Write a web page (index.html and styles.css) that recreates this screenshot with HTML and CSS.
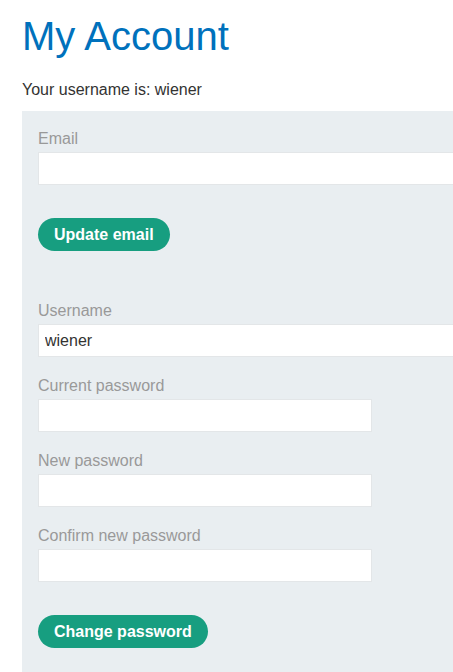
FILE: index.html
```html
<!DOCTYPE html>
<html>
<head>
<meta charset="utf-8">
<link rel="stylesheet" href="styles.css">
</head>
<body>
<div class="page">
  <h1 class="title">My Account</h1>
  <p class="intro">Your username is: wiener</p>
  <div class="panel">
    <form class="form">
      <label class="label">Email</label>
      <input class="field wide" type="email">
      <button class="btn" type="button">Update email</button>
    </form>
    <form class="form second">
      <label class="label">Username</label>
      <input class="field wide" type="text" value="wiener">
      <label class="label">Current password</label>
      <input class="field" type="password">
      <label class="label">New password</label>
      <input class="field" type="password">
      <label class="label">Confirm new password</label>
      <input class="field" type="password">
      <button class="btn" type="button">Change password</button>
    </form>
  </div>
</div>
</body>
</html>
```

FILE: styles.css
```css
html, body {
  margin: 0;
  padding: 0;
  background: #ffffff;
}
body {
  font-family: "Liberation Sans", Arial, sans-serif;
  color: #333332;
}
.page {
  padding: 0 0 0 22px;
  height: 672px;
  overflow: hidden;
  box-sizing: border-box;
}
.title {
  margin: 0;
  padding-top: 14px;
  font-size: 40px;
  font-weight: normal;
  line-height: normal;
  color: #0071bc;
}
.intro {
  margin: 22px 0 0 0;
  font-size: 16px;
  line-height: normal;
}
.panel {
  margin-top: 12px;
  background: #e9eef1;
  padding: 18px 0 30px 16px;
  min-height: 600px;
  box-sizing: border-box;
  overflow: hidden;
}
.form {
  display: flex;
  flex-direction: column;
  align-items: flex-start;
}
.second {
  margin-top: 50px;
}
.label {
  display: block;
  font-size: 16px;
  line-height: 20px;
  color: #999999;
  margin-bottom: 3px;
}
.field {
  box-sizing: border-box;
  width: 334px;
  height: 33px;
  margin: 0 0 19px 0;
  padding: 0 6px;
  border: 1px solid #e3e6e8;
  border-radius: 0;
  background: #ffffff;
  font-family: "Liberation Sans", Arial, sans-serif;
  font-size: 16px;
  color: #333332;
  outline: none;
}
.wide {
  width: 460px;
  flex-shrink: 0;
}
.btn {
  margin-top: 14px;
  height: 33px;
  padding: 0 16px;
  border: none;
  border-radius: 17px;
  background: #179e80;
  color: #ffffff;
  font-family: "Liberation Sans", Arial, sans-serif;
  font-size: 16px;
  font-weight: bold;
  cursor: pointer;
}
```
